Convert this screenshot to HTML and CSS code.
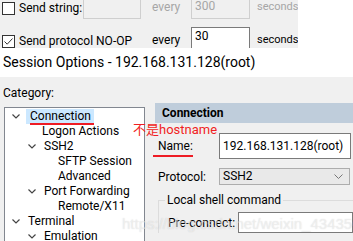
FILE: index.html
```html
<!DOCTYPE html>
<html lang="en">
<head>
    <meta charset="UTF-8">
    <title>Session Options</title>
    <link rel="stylesheet" href="styles.css">
</head>
<body>

<!-- Anti-idle strip cut from the Terminal page -->
<div class="idle">
    <div class="idle-row row-one">
        <label class="check"><span class="box"></span>Send string:</label>
        <span class="field off"></span>
        <span class="word off-text">every</span>
        <span class="field off short">300</span>
        <span class="word off-text">seconds</span>
    </div>
    <div class="idle-row row-two">
        <label class="check"><span class="box ticked">
            <svg width="11" height="11" viewBox="0 0 11 11"><path d="M1.5 5.5 L4.2 8.2 L9.5 2.5" fill="none" stroke="#333" stroke-width="1"/></svg>
        </span>Send protocol NO-OP</label>
        <span></span>
        <span class="word">every</span>
        <span class="field short">30</span>
        <span class="word">seconds</span>
    </div>
</div>

<div class="title">Session Options - 192.168.131.128(root)</div>

<!-- Dialog body -->
<div class="dialog">
    <div class="category-label">Category:</div>
    <div class="columns">
        <ul class="tree">
            <li class="lvl0"><span class="chev"><svg width="8" height="5" viewBox="0 0 8 5"><path d="M0.5 0.5 L4 4 L7.5 0.5" fill="none" stroke="#444" stroke-width="1.2"/></svg></span><span class="sel">Connection</span></li>
            <li class="lvl1 leaf">Logon Actions</li>
            <li class="lvl1"><span class="chev"><svg width="8" height="5" viewBox="0 0 8 5"><path d="M0.5 0.5 L4 4 L7.5 0.5" fill="none" stroke="#444" stroke-width="1.2"/></svg></span>SSH2</li>
            <li class="lvl2 leaf">SFTP Session</li>
            <li class="lvl2 leaf">Advanced</li>
            <li class="lvl1"><span class="chev"><svg width="8" height="5" viewBox="0 0 8 5"><path d="M0.5 0.5 L4 4 L7.5 0.5" fill="none" stroke="#444" stroke-width="1.2"/></svg></span>Port Forwarding</li>
            <li class="lvl2 leaf">Remote/X11</li>
            <li class="lvl0"><span class="chev"><svg width="8" height="5" viewBox="0 0 8 5"><path d="M0.5 0.5 L4 4 L7.5 0.5" fill="none" stroke="#444" stroke-width="1.2"/></svg></span>Terminal</li>
            <li class="lvl1"><span class="chev"><svg width="8" height="5" viewBox="0 0 8 5"><path d="M0.5 0.5 L4 4 L7.5 0.5" fill="none" stroke="#444" stroke-width="1.2"/></svg></span>Emulation</li>
        </ul>

        <div class="panel">
            <div class="panel-head">Connection</div>
            <div class="form-row name-row">
                <span class="lbl marked">Name:</span>
                <span class="input">192.168.131.128(root)</span>
            </div>
            <div class="form-row proto-row">
                <span class="lbl">Protocol:</span>
                <span class="select">SSH2
                    <svg width="9" height="6" viewBox="0 0 9 6"><path d="M0.5 0.5 L4.5 4.5 L8.5 0.5" fill="none" stroke="#777" stroke-width="1"/></svg>
                </span>
            </div>
            <fieldset class="group">
                <legend>Local shell command</legend>
                <div class="form-row pre-row">
                    <span class="lbl">Pre-connect:</span>
                    <span class="input wide"></span>
                </div>
            </fieldset>
        </div>
    </div>

    <!-- red note written on the screenshot -->
    <div class="note">不是hostname</div>
    <div class="watermark">https://blog.csdn.net/weixin_43435675</div>
</div>

</body>
</html>
```

FILE: styles.css
```css
/* Basic Styles */
body {
    margin: 0;
    width: 353px;
    height: 241px;
    overflow: hidden;
    background-color: white;
    font-family: Roboto, "Noto Sans CJK SC", sans-serif;
    font-size: 12px;
    color: #000;
}

/* Top strip */
.idle {
    width: 298px;
    height: 48px;
    background-color: #f0f0f0;
    overflow: hidden;
}

.idle-row {
    display: grid;
    grid-template-columns: 83px 58px 50px 59px 1fr;
    align-items: start;
    white-space: nowrap;
}

.row-one {
    height: 27px;
}

.check {
    display: flex;
    align-items: center;
    padding-left: 2px;
    gap: 4px;
    height: 16px;
}

.row-two .check {
    margin-top: 6px;
}

.box {
    width: 11px;
    height: 11px;
    border: 1px solid #333;
    background-color: white;
    flex: none;
    display: flex;
}

.field {
    height: 19px;
    border: 1px solid #cfcfcf;
    border-top: none;
    background-color: #f0f0f0;
    box-sizing: border-box;
    padding-left: 3px;
    line-height: 13px;
}

.field.off {
    color: #a6a6a6;
}

.row-two .field {
    height: 24px;
    border: 1px solid #7a7a7a;
    background-color: white;
    line-height: 16px;
}

.word {
    padding-left: 11px;
    line-height: 14px;
}

.word:last-child {
    padding-left: 7px;
    font-size: 11px;
}

.row-two .word {
    margin-top: 6px;
}

.off-text {
    color: #a6a6a6;
}

.title {
    height: 29px;
    line-height: 28px;
    padding-left: 3px;
    font-size: 14px;
    white-space: nowrap;
}

/* Dialog */
.dialog {
    position: relative;
    background-color: #f0f0f0;
    height: 164px;
}

.category-label {
    padding: 8px 0 0 3px;
    line-height: 16px;
}

.columns {
    display: flex;
    margin-top: 6px;
}

.tree {
    list-style: none;
    margin: 0 0 0 4px;
    padding: 1px 0 0 0;
    width: 139px;
    height: 140px;
    flex: none;
    background-color: white;
    border: 1px solid #828790;
    border-bottom: none;
}

.tree li {
    height: 15px;
    line-height: 15px;
    white-space: nowrap;
    display: flex;
    align-items: center;
}

.chev {
    width: 18px;
    flex: none;
    display: flex;
    align-items: center;
    padding-left: 2px;
    box-sizing: border-box;
}

.lvl0 { padding-left: 5px; }
.lvl1 { padding-left: 21px; }
.lvl2 { padding-left: 37px; }
.lvl1.leaf { padding-left: 37px; }
.lvl2.leaf { padding-left: 53px; }

.sel {
    position: relative;
    background-color: #cce8ff;
    padding: 0 3px 0 4px;
    margin-left: -2px;
}

.sel::after {
    content: "";
    position: absolute;
    left: 4px;
    right: 0;
    bottom: -1px;
    height: 2px;
    background-color: #ee1c25;
}

.panel {
    flex: 1;
    min-width: 0;
    margin-left: 10px;
    margin-top: -4px;
}

.panel-head {
    height: 20px;
    line-height: 20px;
    background-color: #bfcddb;
    padding-left: 7px;
    font-weight: bold;
}

.form-row {
    display: flex;
    align-items: center;
    white-space: nowrap;
}

.lbl {
    width: 61px;
    flex: none;
    padding-left: 3px;
}

.name-row {
    margin-top: 10px;
    height: 26px;
}

.marked {
    position: relative;
}

.marked::after {
    content: "";
    position: absolute;
    left: -2px;
    width: 40px;
    bottom: -4px;
    height: 2px;
    background-color: #ee1c25;
}

.input {
    flex: 1;
    min-width: 0;
    height: 26px;
    line-height: 24px;
    box-sizing: border-box;
    border: 1px solid #7a7a7a;
    background-color: white;
    padding-left: 3px;
    margin-right: 2px;
}

.proto-row {
    margin-top: 9px;
    height: 17px;
}

.select {
    flex: 1;
    height: 17px;
    box-sizing: border-box;
    border: 1px solid #adadad;
    background-color: #e9e9e9;
    margin-right: 3px;
    padding: 0 6px 0 3px;
    line-height: 15px;
    display: flex;
    justify-content: space-between;
    align-items: center;
}

.group {
    margin: 8px 0 0 3px;
    padding: 5px 0 0 8px;
    border: 1px solid #dcdcdc;
    border-right: none;
    border-bottom: none;
    min-width: 0;
}

.group legend {
    padding: 0 2px;
    margin-left: -2px;
    line-height: 14px;
    white-space: nowrap;
}

.pre-row {
    height: 21px;
}

.pre-row .lbl {
    width: 70px;
    padding-left: 1px;
}

.input.wide {
    height: 21px;
    margin-right: 0;
}

/* Overlays on the picture */
.note {
    position: absolute;
    left: 133px;
    top: 45px;
    color: #f01e23;
    font-size: 13px;
    line-height: 16px;
    font-family: Roboto, "Noto Sans CJK SC", sans-serif;
}

.watermark {
    position: absolute;
    left: 122px;
    top: 138px;
    font-family: "Liberation Sans", sans-serif;
    font-size: 15px;
    color: rgba(255, 255, 255, 0.5);
    text-shadow: 0 0 1px rgba(120, 120, 120, 0.3);
    white-space: nowrap;
}
```
